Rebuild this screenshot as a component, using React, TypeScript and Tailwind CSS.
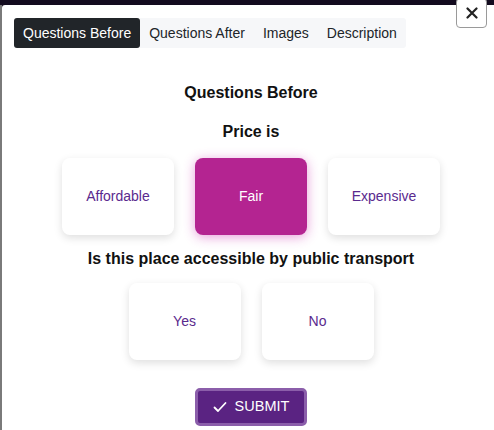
import React, { useState } from "react";
import clsx from "clsx";

const TABS = ["Questions Before", "Questions After", "Images", "Description"];

const OptionCard: React.FC<{ label: string; active?: boolean; onClick: () => void }> = ({ label, active, onClick }) => (
  <button
    onClick={onClick}
    className={clsx(
      "w-[112px] h-[77px] rounded-lg flex items-center justify-center text-[14px]",
      active
        ? "bg-[#b42491] text-white shadow-[0_2px_12px_rgba(200,40,170,0.45)]"
        : "bg-white text-[#5a2a8e] shadow-[0_3px_8px_rgba(0,0,0,0.13)]"
    )}
  >
    {label}
  </button>
);

const App: React.FC = () => {
  const [tab, setTab] = useState(0);
  const [price, setPrice] = useState("Fair");
  const [transport, setTransport] = useState<string | null>(null);

  return (
    <div className="w-[494px] h-[430px] overflow-hidden bg-[#130b1f] pt-[5px] font-['Liberation_Sans',Arial,sans-serif] relative">
      <div className="flex h-full">
        <div className="w-[2px] bg-[#7a7a7a]" />
        <div className="flex-1 bg-white rounded-tl-[3px] pt-[13px] pl-[12px] pr-[6px]">
          {/* Tabs */}
          <div className="flex h-[30px]">
            {TABS.map((t, i) => (
              <button
                key={t}
                onClick={() => setTab(i)}
                className={clsx(
                  "px-[9px] text-[14px] leading-none",
                  i === 0 && "rounded-l-[3px]",
                  i === TABS.length - 1 && "rounded-r-[3px]",
                  tab === i ? "bg-[#212529] text-white rounded-[3px]" : "bg-[#f6f7f9] text-[#212529]"
                )}
              >
                {t}
              </button>
            ))}
          </div>

          <div className="flex flex-col items-center text-[#111]">
            <h2 className="mt-[37px] text-[16px] font-bold leading-none">Questions Before</h2>

            <h3 className="mt-[23px] text-[16px] font-bold leading-none">Price is</h3>
            <div className="mt-[18px] flex gap-[21px]">
              {["Affordable", "Fair", "Expensive"].map((p) => (
                <OptionCard key={p} label={p} active={price === p} onClick={() => setPrice(p)} />
              ))}
            </div>

            <h3 className="mt-[16px] text-[16px] font-bold leading-none">Is this place accessible by public transport</h3>
            <div className="mt-[16px] flex gap-[21px]">
              {["Yes", "No"].map((p) => (
                <OptionCard key={p} label={p} active={transport === p} onClick={() => setTransport(p)} />
              ))}
            </div>

            <button className="mt-[28px] w-[112px] h-[38px] rounded-[5px] bg-[#5a2382] border-[3px] border-[#8b5eaa] text-white text-[14.5px] flex items-center justify-center gap-[8px]">
              <svg width="14" height="12" viewBox="0 0 14 12" fill="none">
                <path d="M1.5 6.5 L5 10 L12.5 2" stroke="white" strokeWidth="1.8" strokeLinecap="round" strokeLinejoin="round" />
              </svg>
              SUBMIT
            </button>
          </div>
        </div>
      </div>

      <button className="absolute right-[7px] -top-[2px] w-[31px] h-[30px] bg-white border border-[#9a9a9a] rounded-[4px] flex items-center justify-center">
        <svg width="12" height="12" viewBox="0 0 12 12">
          <path d="M1.5 1.5 L10.5 10.5 M10.5 1.5 L1.5 10.5" stroke="#222" strokeWidth="2.2" strokeLinecap="round" />
        </svg>
      </button>
    </div>
  );
};

export default App;
